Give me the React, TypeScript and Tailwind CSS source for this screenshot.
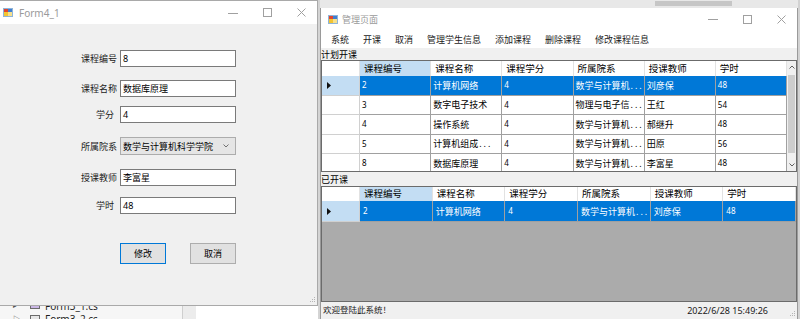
import React from 'react';

const cols = ['课程编号', '课程名称', '课程学分', '所属院系', '授课教师', '学时'];

const planned: string[][] = [
  ['2', '计算机网络', '4', '数学与计算机...', '刘彦保', '48'],
  ['3', '数字电子技术', '4', '物理与电子信...', '王红', '54'],
  ['4', '操作系统', '4', '数学与计算机...', '郝继升', '48'],
  ['5', '计算机组成...', '4', '数学与计算机...', '田原', '56'],
  ['8', '数据库原理', '4', '数学与计算机...', '李富星', '48'],
];

const opened: string[][] = [['2', '计算机网络', '4', '数学与计算机...', '刘彦保', '48']];

const AppIcon = () => (
  <svg width="10" height="9" viewBox="0 0 10 9">
    <rect x="0" y="0" width="10" height="9" fill="#8fb4d8" />
    <rect x="1" y="1" width="4" height="3" fill="#e2462c" />
    <rect x="5" y="1" width="4" height="3" fill="#3f7fd0" />
    <rect x="1" y="4" width="4" height="4" fill="#f3c431" />
    <rect x="5" y="4" width="4" height="4" fill="#f7e08c" />
  </svg>
);

const WinButtons = ({ gap }: { gap: string }) => (
  <div className={`flex items-center ${gap}`}>
    <svg width="10" height="10" viewBox="0 0 10 10">
      <line x1="0" y1="5.5" x2="10" y2="5.5" stroke="#a0a0a0" strokeWidth="1" />
    </svg>
    <svg width="9" height="9" viewBox="0 0 9 9">
      <rect x="0.5" y="0.5" width="8" height="8" fill="none" stroke="#a0a0a0" strokeWidth="1" />
    </svg>
    <svg width="9" height="9" viewBox="0 0 9 9">
      <path d="M0.5 0.5 L8.5 8.5 M8.5 0.5 L0.5 8.5" stroke="#a0a0a0" strokeWidth="1" />
    </svg>
  </div>
);

const Grip = () => (
  <svg width="6" height="6" viewBox="0 0 6 6">
    <rect x="4" y="0" width="1" height="1" fill="#b5b5b5" />
    <rect x="2" y="2" width="1" height="1" fill="#b5b5b5" />
    <rect x="4" y="2" width="1" height="1" fill="#b5b5b5" />
    <rect x="0" y="4" width="1" height="1" fill="#b5b5b5" />
    <rect x="2" y="4" width="1" height="1" fill="#b5b5b5" />
    <rect x="4" y="4" width="1" height="1" fill="#b5b5b5" />
  </svg>
);

function CellText({ text }: { text: string }) {
  const parts = text.split('...');
  return (
    <>
      {parts[0]}
      {parts.length > 1 && <span className="tracking-[2px] ml-[1px]">...</span>}
    </>
  );
}

function Cell({ text, selected, pad }: { text: string; selected: boolean; pad: string }) {
  const isNum = /^\d+$/.test(text);
  return (
    <div
      className={`flex-1 min-w-0 flex items-center ${pad} border-r border-b border-[#a0a0a0] whitespace-nowrap overflow-hidden leading-none ${
        selected ? 'bg-[#0078d7] text-white' : 'bg-white text-black'
      } ${isNum ? 'text-[8px]' : 'text-[9px]'}`}
    >
      <CellText text={text} />
    </div>
  );
}

function Grid({
  rows,
  height,
  headerH,
  rowH,
  pad,
  scroll,
}: {
  rows: string[][];
  height: string;
  headerH: string;
  rowH: string;
  pad: string;
  scroll: boolean;
}) {
  return (
    <div className={`${height} border border-[#6b6b6b] flex overflow-hidden`}>
      <div className="flex-1 flex flex-col bg-[#ababab] overflow-hidden">
        <div className={`${headerH} flex shrink-0 bg-white`}>
          <div className="w-[38px] shrink-0 border-r border-[#e2e2e2]" />
          {cols.map((c, i) => (
            <div
              key={c}
              className={`flex-1 min-w-0 flex items-center pl-[4px] text-[9.5px] leading-none text-black border-r border-[#e2e2e2] ${
                i === 0 ? 'bg-[#c3ddf3]' : 'bg-white'
              }`}
            >
              {c}
            </div>
          ))}
        </div>
        {rows.map((r, i) => (
          <div key={i} className={`${rowH} flex shrink-0`}>
            <div
              className={`w-[38px] shrink-0 flex items-center pl-[5px] border-r border-b border-[#d0d0d0] ${
                i === 0 ? 'bg-[#c3ddf3]' : 'bg-white'
              }`}
            >
              {i === 0 && (
                <svg width="4" height="7" viewBox="0 0 4 7">
                  <polygon points="0,0 4,3.5 0,7" fill="#111" />
                </svg>
              )}
            </div>
            {r.map((t, j) => (
              <Cell key={j} text={t} selected={i === 0} pad={pad} />
            ))}
          </div>
        ))}
      </div>
      {scroll && (
        <div className="w-[9px] shrink-0 flex flex-col items-center bg-[#f0f0f0]">
          <div className="h-[12px] flex items-center justify-center">
            <svg width="6" height="4" viewBox="0 0 6 4">
              <path d="M0.5 3.5 L3 1 L5.5 3.5" fill="none" stroke="#606060" strokeWidth="1" />
            </svg>
          </div>
          <div className="mt-[2px] w-[7px] h-[78px] bg-[#cdcdcd]" />
          <div className="flex-1" />
          <div className="h-[12px] flex items-center justify-center">
            <svg width="6" height="4" viewBox="0 0 6 4">
              <path d="M0.5 0.5 L3 3 L5.5 0.5" fill="none" stroke="#606060" strokeWidth="1" />
            </svg>
          </div>
        </div>
      )}
    </div>
  );
}

function Field({ label, value, mt, extraPr }: { label: string; value: string; mt: string; extraPr?: string }) {
  return (
    <div className={`${mt} h-[17px] flex items-center`}>
      <div className={`w-[117px] text-right text-[9px] leading-none text-[#1a1a1a] ${extraPr ?? ''}`}>{label}</div>
      <div className="ml-[3px] w-[116px] h-full bg-white border border-[#7a7a7a] flex items-center pl-[2px] text-[9px] leading-none text-black">
        {value}
      </div>
    </div>
  );
}

function LeftWindow() {
  return (
    <div className="h-[306px] shrink-0 flex flex-col border-t border-r border-b border-[#a9a9a9] bg-[#f0f0f0]">
      <div className="h-[23px] shrink-0 bg-white flex items-center pl-[3px] pr-[11px]">
        <AppIcon />
        <span className="ml-[6px] text-[10px] leading-none text-[#9a9a9a]">Form4_1</span>
        <div className="flex-1" />
        <WinButtons gap="gap-[25px]" />
      </div>
      <div className="flex-1 flex flex-col">
        <Field label="课程编号" value="8" mt="mt-[26px]" />
        <Field label="课程名称" value="数据库原理" mt="mt-[13px]" />
        <Field label="学分" value="4" mt="mt-[9px]" extraPr="pr-[3px]" />
        <div className="mt-[14px] h-[18px] flex items-center">
          <div className="w-[117px] text-right text-[9px] leading-none text-[#1a1a1a]">所属院系</div>
          <div className="ml-[3px] w-[116px] h-full bg-[#e5e5e5] border border-[#acacac] flex items-center pl-[2px] pr-[6px] text-[9px] leading-none text-black">
            <span className="flex-1">数学与计算机科学学院</span>
            <svg width="6" height="4" viewBox="0 0 6 4">
              <path d="M0.5 0.5 L3 3 L5.5 0.5" fill="none" stroke="#707070" strokeWidth="1" />
            </svg>
          </div>
        </div>
        <Field label="授课教师" value="李富星" mt="mt-[14px]" />
        <Field label="学时" value="48" mt="mt-[11px]" extraPr="pr-[3px]" />
        <div className="mt-[29px] h-[21px] flex">
          <div className="ml-[120px] w-[46px] h-full border border-[#0078d7] bg-[#e1e1e1] flex items-center justify-center text-[9px] leading-none text-black">
            修改
          </div>
          <div className="ml-[24px] w-[46px] h-full border border-[#adadad] bg-[#e1e1e1] flex items-center justify-center text-[9px] leading-none text-black">
            取消
          </div>
        </div>
        <div className="flex-1" />
        <div className="h-[8px] flex justify-end pr-[1px]">
          <Grip />
        </div>
      </div>
    </div>
  );
}

function VsStrip() {
  return (
    <div className="flex-1 bg-[#f6f6f6] overflow-hidden flex">
      <div className="w-[182px] shrink-0 flex flex-col -mt-[7px] text-[10px] leading-none text-[#1e1e1e]">
        <div className="h-[13px] shrink-0 flex items-center">
          <span className="ml-[13px] w-[12px] text-[7px] text-[#555]">▸</span>
          <span className="ml-[5px] w-[10px] h-[7px] border border-[#6b6b6b] bg-[#c9b6e4]" />
          <span className="ml-[5px]">Form3_1.cs</span>
        </div>
        <div className="h-[13px] shrink-0 flex items-center">
          <span className="ml-[13px] w-[12px] text-[7px] text-[#555]">▷</span>
          <span className="ml-[5px] w-[10px] h-[7px] border border-[#6b6b6b] bg-[#e6e6e6]" />
          <span className="ml-[5px]">Form3_2.cs</span>
        </div>
      </div>
      <div className="w-[14px] shrink-0 border-l border-[#cfcfcf] bg-[#ececec]" />
      <div className="flex-1 bg-white" />
    </div>
  );
}

function RightWindow() {
  const menu = ['系统', '开课', '取消', '管理学生信息', '添加课程', '删除课程', '修改课程信息'];
  return (
    <div className="flex-1 flex flex-col border-l border-r border-[#9a9a9a] bg-[#f0f0f0]">
      <div className="h-[22px] shrink-0 bg-white flex items-center pl-[7px] pr-[11px]">
        <AppIcon />
        <span className="ml-[4px] text-[9px] leading-none text-[#9a9a9a]">管理页面</span>
        <div className="flex-1" />
        <WinButtons gap="gap-[25px]" />
      </div>
      <div className="h-[18px] shrink-0 bg-white flex items-center pl-[3px]">
        {menu.map((m) => (
          <span key={m} className="px-[7px] text-[9px] leading-none text-[#1a1a1a]">
            {m}
          </span>
        ))}
      </div>
      <div className="h-[12px] shrink-0 flex items-center text-[9px] leading-none text-black">计划开课</div>
      <Grid rows={planned} height="h-[112px]" headerH="h-[15px]" rowH="h-[19.5px]" pad="pl-[2px]" scroll />
      <div className="h-[14px] shrink-0 flex items-center text-[9px] leading-none text-black">已开课</div>
      <Grid rows={opened} height="h-[116px]" headerH="h-[14px]" rowH="h-[21px]" pad="pl-[3px]" scroll={false} />
      <div className="flex-1 flex items-center pl-[2px] pr-[1px] text-[8.5px] leading-none text-[#1a1a1a]">
        <span>欢迎登陆此系统！</span>
        <div className="flex-1" />
        <span className="text-[9px]">2022/6/28 15:49:26</span>
        <div className="ml-[22px] self-end mb-[2px]">
          <Grip />
        </div>
      </div>
    </div>
  );
}

export default function App() {
  return (
    <div className="w-[800px] h-[319px] flex overflow-hidden bg-[#e4e4e4] font-['Noto_Sans','Noto_Sans_CJK_SC',sans-serif]">
      <div className="w-[318px] shrink-0 flex flex-col">
        <LeftWindow />
        <VsStrip />
      </div>
      <div className="w-[2px] shrink-0 bg-[#d4d4d4]" />
      <div className="w-[478px] shrink-0 flex flex-col">
        <div className="h-[8px] shrink-0 flex bg-[#e8e8e8]">
          <div className="ml-[335px] mt-[1px] w-[77px] h-[5px] bg-[#c6c6c6]" />
        </div>
        <RightWindow />
      </div>
      <div className="flex-1 bg-[#d2d2d2]" />
    </div>
  );
}
